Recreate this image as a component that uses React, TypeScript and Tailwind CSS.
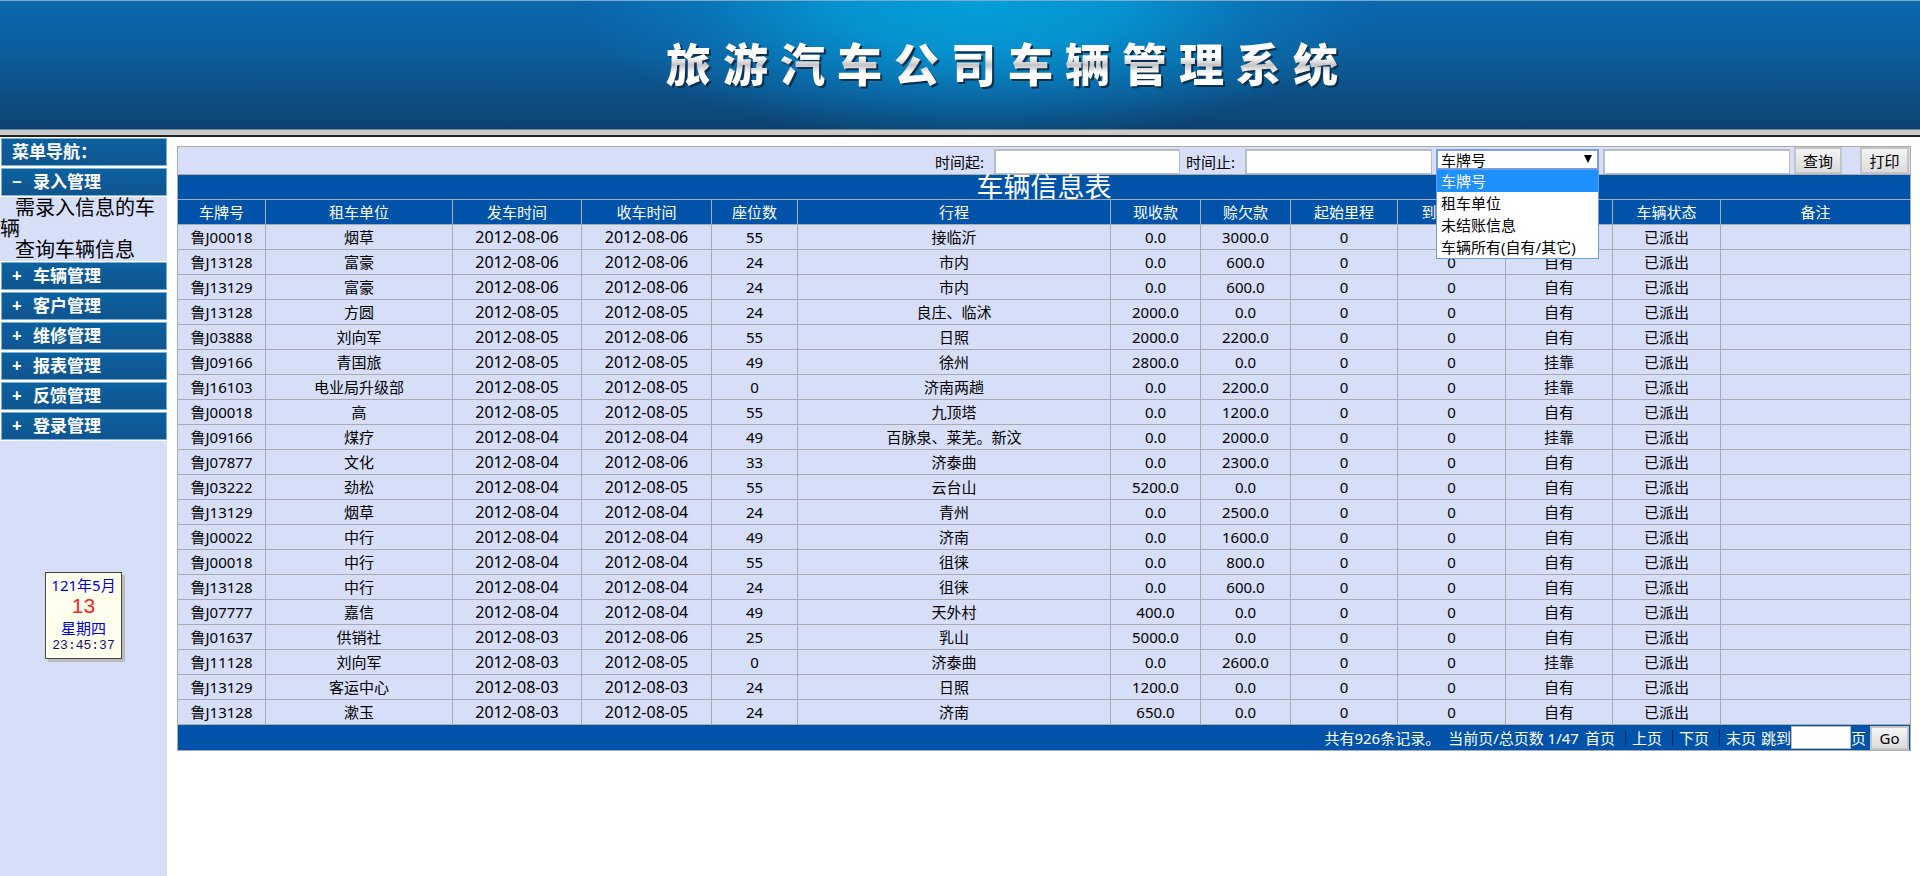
import { Fragment, useState } from "react";

const menus = ["车辆管理", "客户管理", "维修管理", "报表管理", "反馈管理", "登录管理"];

const columns = [
  { label: "车牌号", width: "w-[88px]" },
  { label: "租车单位", width: "w-[187px]" },
  { label: "发车时间", width: "w-[129px]" },
  { label: "收车时间", width: "w-[130px]" },
  { label: "座位数", width: "w-[86px]" },
  { label: "行程", width: "w-[313px]" },
  { label: "现收款", width: "w-[90px]" },
  { label: "赊欠款", width: "w-[90px]" },
  { label: "起始里程", width: "w-[107px]" },
  { label: "到达里程", width: "w-[108px]" },
  { label: "车辆所有", width: "w-[107px]" },
  { label: "车辆状态", width: "w-[108px]" },
  { label: "备注", width: "w-[190px]" },
];

const rows = [
  ["鲁J00018", "烟草", "2012-08-06", "2012-08-06", "55", "接临沂", "0.0", "3000.0", "自有"],
  ["鲁J13128", "富豪", "2012-08-06", "2012-08-06", "24", "市内", "0.0", "600.0", "自有"],
  ["鲁J13129", "富豪", "2012-08-06", "2012-08-06", "24", "市内", "0.0", "600.0", "自有"],
  ["鲁J13128", "方圆", "2012-08-05", "2012-08-05", "24", "良庄、临沭", "2000.0", "0.0", "自有"],
  ["鲁J03888", "刘向军", "2012-08-05", "2012-08-06", "55", "日照", "2000.0", "2200.0", "自有"],
  ["鲁J09166", "青国旅", "2012-08-05", "2012-08-05", "49", "徐州", "2800.0", "0.0", "挂靠"],
  ["鲁J16103", "电业局升级部", "2012-08-05", "2012-08-05", "0", "济南两趟", "0.0", "2200.0", "挂靠"],
  ["鲁J00018", "高", "2012-08-05", "2012-08-05", "55", "九顶塔", "0.0", "1200.0", "自有"],
  ["鲁J09166", "煤疗", "2012-08-04", "2012-08-04", "49", "百脉泉、莱芜。新汶", "0.0", "2000.0", "挂靠"],
  ["鲁J07877", "文化", "2012-08-04", "2012-08-06", "33", "济泰曲", "0.0", "2300.0", "自有"],
  ["鲁J03222", "劲松", "2012-08-04", "2012-08-05", "55", "云台山", "5200.0", "0.0", "自有"],
  ["鲁J13129", "烟草", "2012-08-04", "2012-08-04", "24", "青州", "0.0", "2500.0", "自有"],
  ["鲁J00022", "中行", "2012-08-04", "2012-08-04", "49", "济南", "0.0", "1600.0", "自有"],
  ["鲁J00018", "中行", "2012-08-04", "2012-08-04", "55", "徂徕", "0.0", "800.0", "自有"],
  ["鲁J13128", "中行", "2012-08-04", "2012-08-04", "24", "徂徕", "0.0", "600.0", "自有"],
  ["鲁J07777", "嘉信", "2012-08-04", "2012-08-04", "49", "天外村", "400.0", "0.0", "自有"],
  ["鲁J01637", "供销社", "2012-08-03", "2012-08-06", "25", "乳山", "5000.0", "0.0", "自有"],
  ["鲁J11128", "刘向军", "2012-08-03", "2012-08-05", "0", "济泰曲", "0.0", "2600.0", "挂靠"],
  ["鲁J13129", "客运中心", "2012-08-03", "2012-08-03", "24", "日照", "1200.0", "0.0", "自有"],
  ["鲁J13128", "漱玉", "2012-08-03", "2012-08-05", "24", "济南", "650.0", "0.0", "自有"],
];

const searchTypes = ["车牌号", "租车单位", "未结账信息", "车辆所有(自有/其它)"];

const menuBar =
  "flex h-7 w-full items-center border border-[#7fb0d6] bg-linear-to-b from-[#0b619f] to-[#10558f] text-[17px] font-bold text-white";
const textBox = "h-[25px] border-2 border-r border-b border-[#b9bcc4] bg-white px-1 outline-none";
const grayButton =
  "border-2 border-[#c4c4c4] bg-linear-to-b from-[#f4f4f4] to-[#dcdcdc] text-center text-black";

function Header() {
  return (
    <header>
      <div className="flex h-[130px] items-center justify-center border-t border-b border-t-[#7fa9c6] border-b-[#6c87a0] bg-[radial-gradient(ellipse_400px_140px_at_51%_0%,#049fd9_0%,#0598d4e6_35%,#0880c380_70%,#0b6ab000_100%),linear-gradient(to_bottom,#0b67ae_0%,#0c5c98_45%,#0d4271_100%)] pl-[84px]">
        <h1 className="flex gap-3 bg-[linear-gradient(to_bottom,#fff_35%,#c4c4c8_50%,#fff_66%)] bg-clip-text text-[45px] leading-[52px] font-black text-transparent drop-shadow-[2px_2px_0_#0b2f4c]">
          {[..."旅游汽车公司车辆管理系统"].map((char, i) => (
            <span key={i}>{char}</span>
          ))}
        </h1>
      </div>
      <div className="h-[7px] border-b-2 border-[#222] bg-[#cbcbcb]" />
    </header>
  );
}

function Clock() {
  return (
    <div className="mx-auto mt-[131px] mb-8 w-[77px] border border-[#444] bg-[#ffffee] py-1 text-center text-[15px] leading-[17px] text-[#0000e0] shadow-[3px_3px_0_#bbb]">
      <p className="leading-4">121年5月</p>
      <p className="font-['Liberation_Sans',sans-serif] text-[21px] leading-[25px] text-[#ff2020]">13</p>
      <p className="leading-5">星期四</p>
      <p className="font-['Liberation_Mono',monospace] text-[13px] leading-4 text-[#10106c]">23:45:37</p>
    </div>
  );
}

function Sidebar() {
  return (
    <aside className="w-[167px] shrink-0 bg-[#d6def8]">
      <nav className="text-black">
        <div className="flex flex-col gap-0.5 border-b border-white bg-white pt-px pl-px">
          <h2 className={`${menuBar} pl-[10px]`}>菜单导航：</h2>
          <button className={`${menuBar} pl-[10px]`}>
            <span className="w-[21px] text-left">−</span>录入管理
          </button>
        </div>
        <div className="h-16 text-[20px] leading-[21px]">
          <a href="#entry" className="block indent-[15px]">需录入信息的车辆</a>
          <a href="#query" className="block indent-[15px]">查询车辆信息</a>
        </div>
        <div className="flex flex-col gap-0.5 border-y border-white bg-white pl-px">
          {menus.map((menu) => (
            <button key={menu} className={`${menuBar} pl-[10px]`}>
              <span className="w-[21px] text-left">+</span>
              {menu}
            </button>
          ))}
        </div>
      </nav>
      <Clock />
    </aside>
  );
}

function SearchBar() {
  const [type, setType] = useState(searchTypes[0]);

  return (
    <form className="flex h-[27px] items-end justify-end pr-px" onSubmit={(e) => e.preventDefault()}>
      <label htmlFor="from" className="pr-[10px]">时间起:</label>
      <input id="from" className={`${textBox} w-[186px]`} />
      <label htmlFor="to" className="pr-[10px] pl-[6px]">时间止:</label>
      <input id="to" className={`${textBox} w-[187px]`} />
      <div className="relative ml-1 h-[25px] w-[163px]">
        <select
          aria-label="查询类型"
          value={type}
          onChange={(e) => setType(e.target.value)}
          className="block h-[21px] w-full appearance-none border-2 border-[#7ba0dd] bg-white pl-[3px] leading-4 outline-none"
        >
          {searchTypes.map((item) => (
            <option key={item}>{item}</option>
          ))}
        </select>
        <svg viewBox="0 0 8 8" className="pointer-events-none absolute top-[6px] right-[7px] size-2">
          <path d="M0 0h8L4 8z" fill="#000" />
        </svg>
        <ul className="absolute top-5 left-0 z-10 w-full border border-[#6f9be0] bg-white text-left leading-[22px]">
          {searchTypes.map((item) => (
            <li
              key={item}
              onClick={() => setType(item)}
              className={item === type ? "bg-[#1e90ff] pl-1 whitespace-nowrap text-white" : "pl-1 whitespace-nowrap"}
            >
              {item}
            </li>
          ))}
        </ul>
      </div>
      <input aria-label="关键字" className={`${textBox} ml-1 w-[187px]`} />
      <button className={`${grayButton} ml-1 h-[27px] w-12`}>查询</button>
      <button type="button" className={`${grayButton} ml-[18px] h-[27px] w-[49px]`}>打印</button>
    </form>
  );
}

function Pager() {
  return (
    <div className="flex h-[25px] items-center justify-end pr-px text-white">
      <span className="pr-2">共有926条记录。</span>
      <span className="pr-[6px]">当前页/总页数 1/47</span>
      {["首页", "上页", "下页", "末页"].map((page, i) => (
        <Fragment key={page}>
          {i > 0 && <span className="mr-[6px] ml-[10px] h-4 w-px bg-[#002060]" />}
          <a href="#page">{page}</a>
        </Fragment>
      ))}
      <label htmlFor="jump" className="pl-[5px]">跳到</label>
      <input id="jump" className="h-[23px] w-[60px] border border-[#b9bcc4] bg-white px-1 text-black outline-none" />
      <span className="pr-1">页</span>
      <button className={`${grayButton} h-6 w-[39px] leading-5`}>Go</button>
    </div>
  );
}

export default function App() {
  return (
    <div className="flex min-h-screen flex-col bg-white font-['Noto_Sans','Noto_Sans_CJK_SC',sans-serif] text-[15px] text-black">
      <Header />
      <div className="flex flex-1">
        <Sidebar />
        <main className="min-w-0 flex-1 pt-[9px] pr-[9px] pl-[10px]">
          <table className="w-full table-fixed border-collapse border border-[#a9abb0] bg-[#d6def8] text-center leading-6 [&_td]:border [&_td]:border-[#a9abb0] [&_td]:p-0 [&_th]:border [&_th]:border-[#a9abb0] [&_th]:p-0">
            <colgroup>
              {columns.map((col) => (
                <col key={col.label} className={col.width} />
              ))}
            </colgroup>
            <thead>
              <tr>
                <td colSpan={13}>
                  <SearchBar />
                </td>
              </tr>
              <tr className="h-[25px] bg-[#0053a9] text-white">
                <th colSpan={13} className="text-[27px] font-normal">车辆信息表</th>
              </tr>
              <tr className="h-[25px] bg-[#0053a9] text-white">
                {columns.map((col) => (
                  <th key={col.label} className="font-normal">{col.label}</th>
                ))}
              </tr>
            </thead>
            <tbody>
              {rows.map((row, i) => (
                <tr key={i} className="h-[25px]">
                  {row.slice(0, 8).map((cell, j) => (
                    <td key={j} className={j === 2 || j === 3 ? "text-[16px]" : undefined}>{cell}</td>
                  ))}
                  <td>0</td>
                  <td>0</td>
                  <td>{row[8]}</td>
                  <td>已派出</td>
                  <td></td>
                </tr>
              ))}
            </tbody>
            <tfoot>
              <tr className="bg-[#0053a9]">
                <td colSpan={13}>
                  <Pager />
                </td>
              </tr>
            </tfoot>
          </table>
        </main>
      </div>
    </div>
  );
}
